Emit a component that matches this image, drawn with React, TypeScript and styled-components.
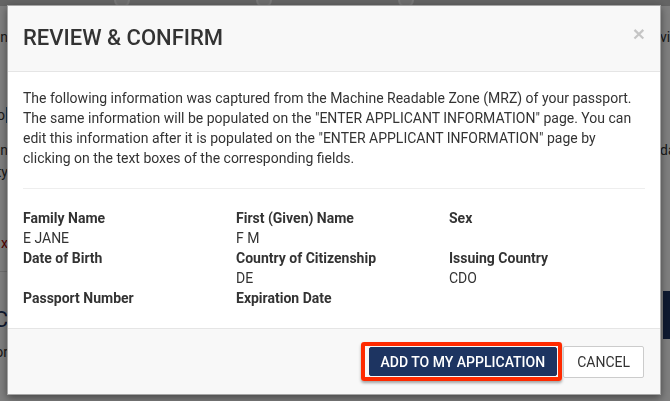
import React from "react";
import styled, { createGlobalStyle } from "styled-components";

const GlobalStyle = createGlobalStyle`
  html, body {
    margin: 0;
    padding: 0;
    width: 670px;
    height: 401px;
    overflow: hidden;
    font-family: Roboto, "Liberation Sans", Arial, sans-serif;
    color: #333;
  }
  * { box-sizing: border-box; }
`;

// ---- page behind the dialog ----

const Page = styled.div`
  position: relative;
  width: 670px;
  height: 401px;
  background: #fff;
  display: flex;
  flex-direction: column;
`;

const Stepper = styled.div`
  height: 6px;
  background: #c8c8c8;
  display: flex;
  justify-content: flex-start;
  gap: 126px;
  padding-left: 114px;
`;

const StepDot = styled.span`
  width: 16px;
  height: 16px;
  margin-top: -8px;
  border-radius: 50%;
  background: #ddd;
  border: 2px solid #eee;
`;

const Columns = styled.div`
  flex: 1;
  display: flex;
  justify-content: space-between;
`;

const EdgeCol = styled.div<{ $side: "left" | "right" }>`
  width: ${(p) => (p.$side === "left" ? "8px" : "10px")};
  overflow: hidden;
  display: flex;
  flex-direction: column;
  align-items: ${(p) => (p.$side === "left" ? "flex-end" : "flex-start")};
  font-size: 14px;
  line-height: 20px;
  color: #333;
`;

const Frag = styled.span<{ $top: number; $color?: string; $size?: number }>`
  margin-top: ${(p) => p.$top}px;
  white-space: nowrap;
  color: ${(p) => p.$color || "#333"};
  font-size: ${(p) => p.$size || 14}px;
  line-height: 20px;
`;

const Rule = styled.div<{ $top: number }>`
  margin-top: ${(p) => p.$top}px;
  height: 1px;
  width: 100%;
  background: #ddd;
`;

const InputEnd = styled.span<{ $top: number }>`
  margin-top: ${(p) => p.$top}px;
  display: flex;
  align-items: center;
  gap: 1px;
  font-size: 14px;
  line-height: 20px;
  &::after {
    content: "";
    width: 2px;
    height: 16px;
    background: #2a6aa8;
  }
`;

const NavyBlock = styled.div<{ $top: number }>`
  margin-top: ${(p) => p.$top}px;
  margin-left: 3px;
  width: 20px;
  height: 48px;
  background: #1d3461;
`;

// ---- dialog ----

const Backdrop = styled.div`
  position: fixed;
  inset: 0;
  background: rgba(0, 0, 0, 0.5);
  display: flex;
  align-items: flex-start;
  padding: 5px 0 0 7px;
`;

const Modal = styled.div`
  width: 654px;
  background: #fff;
  border: 1px solid rgba(0, 0, 0, 0.35);
  box-shadow: 0 3px 8px rgba(0, 0, 0, 0.45);
  display: flex;
  flex-direction: column;
`;

const Header = styled.div`
  display: flex;
  justify-content: space-between;
  align-items: flex-start;
  padding: 19px 15px 20px;
  background: #f8f8f8;
  border-bottom: 1px solid #e5e5e5;
`;

const Title = styled.h4`
  margin: 0;
  font-size: 22px;
  line-height: 26px;
  font-weight: 500;
  color: #333;
`;

const Close = styled.button`
  border: 0;
  background: none;
  padding: 0;
  margin-top: -2px;
  font-family: "Liberation Sans", Arial, sans-serif;
  font-size: 21px;
  font-weight: 700;
  line-height: 1;
  color: #000;
  opacity: 0.2;
  cursor: pointer;
`;

const Body = styled.div`
  padding: 16px 15px 0;
`;

const Intro = styled.p`
  margin: 0;
  font-size: 14px;
  line-height: 20px;
  color: #333;
`;

const Divider = styled.hr`
  margin: 20px 0 19px;
  border: 0;
  border-top: 1px solid #eee;
`;

const Fields = styled.div`
  display: grid;
  grid-template-columns: 213px 213px 1fr;
  grid-auto-rows: 40px;
`;

const Field = styled.div`
  display: flex;
  flex-direction: column;
`;

const Label = styled.span`
  font-size: 14px;
  line-height: 20px;
  font-weight: 700;
  color: #333;
`;

const Value = styled.span`
  font-size: 14px;
  line-height: 20px;
  min-height: 20px;
  color: #333;
`;

const Footer = styled.div`
  display: flex;
  justify-content: flex-end;
  align-items: center;
  padding: 13px 16px 13px;
  background: #f8f8f8;
  border-top: 1px solid #e5e5e5;
`;

const Highlight = styled.span`
  display: inline-flex;
  padding: 1px 1px 1px 4px;
  border: 4px solid #ff2a00;
  border-radius: 3px;
  box-shadow: 0 2px 3px rgba(0, 0, 0, 0.35);
  margin-right: 1px;
`;

const Button = styled.button<{ $variant: "primary" | "default" }>`
  height: ${(p) => (p.$variant === "primary" ? "29px" : "32px")};
  padding: 0 ${(p) => (p.$variant === "primary" ? "11px" : "13px")};
  border-radius: 2px;
  font-family: Roboto, "Liberation Sans", Arial, sans-serif;
  font-size: 14px;
  font-weight: ${(p) => (p.$variant === "primary" ? 500 : 400)};
  text-transform: uppercase;
  cursor: pointer;
  background: ${(p) => (p.$variant === "primary" ? "#1d3461" : "#fff")};
  color: ${(p) => (p.$variant === "primary" ? "#fff" : "#333")};
  border: 1px solid ${(p) => (p.$variant === "primary" ? "#1d3461" : "#ccc")};
`;

const fields = [
  { label: "Family Name", value: "E JANE" },
  { label: "First (Given) Name", value: "F M" },
  { label: "Sex", value: "" },
  { label: "Date of Birth", value: "" },
  { label: "Country of Citizenship", value: "DE" },
  { label: "Issuing Country", value: "CDO" },
  { label: "Passport Number", value: "" },
  { label: "Expiration Date", value: "" },
];

export default function App() {
  return (
    <>
      <GlobalStyle />
      <Page>
        <Stepper>
          <StepDot />
          <StepDot />
          <StepDot />
        </Stepper>
        <Columns>
          <EdgeCol $side="left">
            <Frag $top={21}>Information</Frag>
            <InputEnd $top={58}>Info</InputEnd>
            <Frag $top={15}>Citizen</Frag>
            <Frag $top={2}>Nationality</Frag>
            <Frag $top={51} $color="#a00">x</Frag>
            <Rule $top={18} />
            <Frag $top={38} $color="#1d3461" $size={22}>ABC</Frag>
            <Frag $top={12}>Indicator</Frag>
          </EdgeCol>
          <EdgeCol $side="right">
            <Frag $top={21}>view</Frag>
            <Frag $top={93}>date</Frag>
            <NavyBlock $top={131} />
          </EdgeCol>
        </Columns>
        <Backdrop>
          <Modal>
            <Header>
              <Title>REVIEW &amp; CONFIRM</Title>
              <Close aria-label="Close">×</Close>
            </Header>
            <Body>
              <Intro>
                The following information was captured from the Machine Readable
                Zone (MRZ) of your passport. The same information will be
                populated on the "ENTER APPLICANT INFORMATION" page. You can edit
                this information after it is populated on the "ENTER APPLICANT
                INFORMATION" page by clicking on the text boxes of the
                corresponding fields.
              </Intro>
              <Divider />
              <Fields>
                {fields.map((f) => (
                  <Field key={f.label}>
                    <Label>{f.label}</Label>
                    <Value>{f.value}</Value>
                  </Field>
                ))}
              </Fields>
            </Body>
            <Footer>
              <Highlight>
                <Button $variant="primary">Add to my application</Button>
              </Highlight>
              <Button $variant="default">Cancel</Button>
            </Footer>
          </Modal>
        </Backdrop>
      </Page>
    </>
  );
}
